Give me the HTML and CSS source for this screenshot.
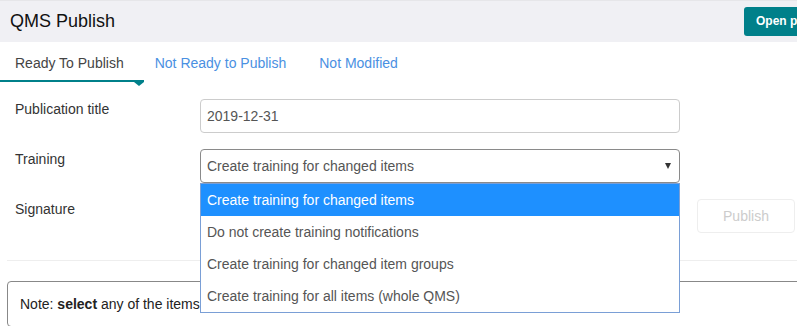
FILE: index.html
```html
<!DOCTYPE html>
<html lang="en">
	<head>
		<meta charset="UTF-8" />
		<meta name="viewport" content="width=device-width, initial-scale=1.0" />
		<title>QMS Publish</title>
		<link rel="stylesheet" href="styles.css">
	</head>
	<body>
		<header class="topbar">
			<h1 class="title">QMS Publish</h1>
			<button class="btn-open">Open publication</button>
		</header>

		<ul class="tabs">
			<li class="tab active">Ready To Publish</li>
			<li class="tab">Not Ready to Publish</li>
			<li class="tab">Not Modified</li>
		</ul>

		<div class="form">
			<div class="row">
				<label class="label" for="pub-title">Publication title</label>
				<input class="field" id="pub-title" value="2019-12-31" />
			</div>
			<div class="row">
				<label class="label">Training</label>
				<div class="select-wrap">
					<div class="field select">
						<span>Create training for changed items</span>
						<span class="caret"></span>
					</div>
					<ul class="options">
						<li class="option selected">Create training for changed items</li>
						<li class="option">Do not create training notifications</li>
						<li class="option">Create training for changed item groups</li>
						<li class="option">Create training for all items (whole QMS)</li>
					</ul>
				</div>
			</div>
			<div class="row">
				<label class="label">Signature</label>
				<div></div>
				<button class="btn-publish" disabled>Publish</button>
			</div>
		</div>

		<hr class="divider" />

		<div class="note">
			Note: <b>select</b> any of the items in the list below to exclude them from the publication.
		</div>
	</body>
</html>
```

FILE: styles.css
```css
body {
	margin: 0;
	font-family: "Liberation Sans", Arial, sans-serif;
	font-size: 14px;
	color: #333;
	background-color: #fff;
	overflow: hidden;
}
.topbar {
	display: flex;
	align-items: center;
	height: 41px;
	border-top: 1px solid #e6e6e9;
	background-color: #f0f0f4;
	padding-left: 10px;
	white-space: nowrap;
	overflow: hidden;
}
.title {
	flex: 0 0 734px;
	margin: 0;
	font-size: 18px;
	font-weight: normal;
	color: #111;
}
.btn-open {
	flex-shrink: 0;
	height: 29px;
	margin-top: -1px;
	padding: 0 12px;
	border: none;
	border-radius: 3px;
	background-color: #00808a;
	color: #fff;
	font-family: inherit;
	font-size: 12px;
	font-weight: bold;
}
.tabs {
	display: flex;
	margin: 0;
	padding: 0;
	list-style: none;
	height: 40px;
}
.tab {
	position: relative;
	padding: 1px 16px 0 15px;
	line-height: 40px;
	color: #4a90e2;
}
.tab:nth-child(2) {
	padding-left: 11px;
}
.tab:nth-child(3) {
	padding-left: 17px;
}
.tab.active {
	color: #444;
	padding-right: 20px;
}
.tab.active::after {
	content: "";
	position: absolute;
	left: 0;
	right: 0;
	bottom: 0;
	height: 2px;
	background-color: #00808a;
}
.tab.active::before {
	content: "";
	position: absolute;
	right: 0;
	bottom: -4px;
	border-left: 5px solid transparent;
	border-right: 5px solid transparent;
	border-top: 4px solid #00808a;
}
.form {
	padding: 17px 0 0 15px;
}
.row {
	display: grid;
	grid-template-columns: 185px 480px 115px;
	height: 34px;
	margin-bottom: 16px;
}
.label {
	line-height: 20px;
}
.field {
	box-sizing: border-box;
	height: 34px;
	padding: 0 6px;
	border: 1px solid #ccc;
	border-radius: 4px;
	font-family: inherit;
	font-size: 14px;
	color: #555;
	outline: none;
}
.select-wrap {
	position: relative;
}
.select {
	display: flex;
	align-items: center;
	justify-content: space-between;
	border-color: #8a8a8a;
	padding-right: 8px;
}
.caret {
	border-left: 3.5px solid transparent;
	border-right: 3.5px solid transparent;
	border-top: 6px solid #333;
}
.options {
	position: absolute;
	top: 100%;
	left: 0;
	right: 0;
	margin: 0;
	padding: 0;
	list-style: none;
	background-color: #fff;
	border: 1px solid #7a9fd6;
	z-index: 2;
}
.option {
	height: 32px;
	line-height: 32px;
	padding: 0 6px;
	color: #555;
}
.option.selected {
	background-color: #1e90ff;
	color: #fff;
}
.btn-publish {
	height: 34px;
	margin-left: 17px;
	border: 1px solid #eee;
	border-radius: 4px;
	background-color: #fff;
	color: #ccc;
	font-family: inherit;
	font-size: 14px;
}
.divider {
	margin: 27px 0 0 7px;
	border: none;
	border-top: 1px solid #eee;
}
.note {
	margin: 20px -10px 0 7px;
	padding: 12px 12px;
	line-height: 20px;
	border: 1px solid #888;
	border-radius: 4px;
	white-space: nowrap;
	color: #222;
}
```
